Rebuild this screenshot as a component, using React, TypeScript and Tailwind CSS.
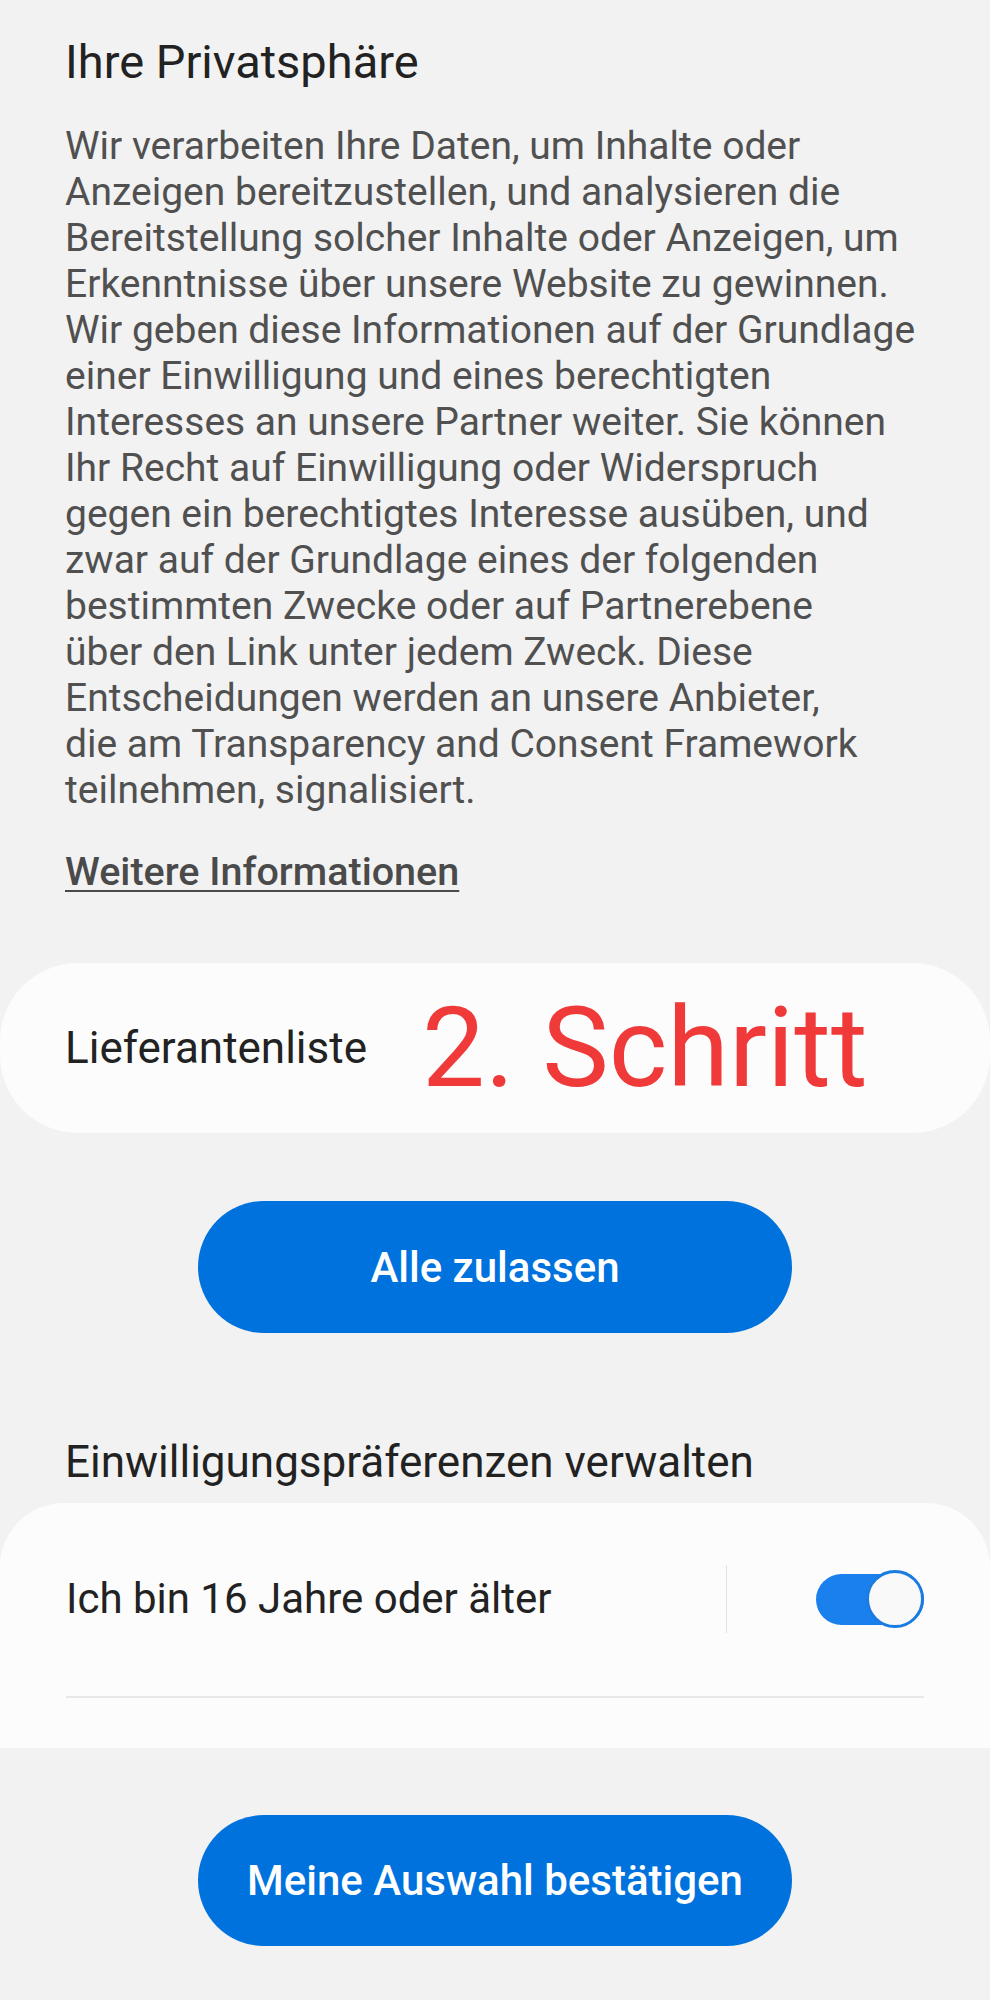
const bodyLines = [
  "Wir verarbeiten Ihre Daten, um Inhalte oder",
  "Anzeigen bereitzustellen, und analysieren die",
  "Bereitstellung solcher Inhalte oder Anzeigen, um",
  "Erkenntnisse über unsere Website zu gewinnen.",
  "Wir geben diese Informationen auf der Grundlage",
  "einer Einwilligung und eines berechtigten",
  "Interesses an unsere Partner weiter. Sie können",
  "Ihr Recht auf Einwilligung oder Widerspruch",
  "gegen ein berechtigtes Interesse ausüben, und",
  "zwar auf der Grundlage eines der folgenden",
  "bestimmten Zwecke oder auf Partnerebene",
  "über den Link unter jedem Zweck. Diese",
  "Entscheidungen werden an unsere Anbieter,",
  "die am Transparency and Consent Framework",
  "teilnehmen, signalisiert.",
];

function Toggle() {
  return (
    <div className="flex h-[51px] w-[108px] items-center justify-end rounded-full bg-[#1a80ee]">
      <div className="h-[58px] w-[58px] shrink-0 rounded-full border-[3px] border-[#1a7ce0] bg-[#f9f9f9]" />
    </div>
  );
}

export default function App() {
  return (
    <div className="min-h-[2000px] w-[990px] bg-[#f2f2f2] font-[Roboto,sans-serif] pb-[54px]">
      {/* Intro text */}
      <div className="px-[65px] pt-[34px]">
        <h1 className="text-[47px] leading-[56px] text-[#222222]">Ihre Privatsphäre</h1>

        <p className="mt-[33px] text-[39px] leading-[46px] text-[#505050]">
          {bodyLines.map((line) => (
            <span key={line} className="block whitespace-nowrap">
              {line}
            </span>
          ))}
        </p>

        <a className="mt-[36px] block text-[39.5px] font-medium leading-[46px] text-[#4a4a4a] underline decoration-2 underline-offset-[5px]">
          Weitere Informationen
        </a>
      </div>

      {/* Vendor list */}
      <div className="mt-[68px] flex h-[170px] items-center gap-[55px] rounded-[78px] bg-[#fcfcfc] px-[65px]">
        <span className="text-[44px] leading-none text-[#222222]">Lieferantenliste</span>
        <span className="text-[112px] leading-none text-[#f03a3a]">2. Schritt</span>
      </div>

      <button className="mx-auto mt-[68px] flex h-[132px] w-[594px] items-center justify-center rounded-full bg-[#0072dd] text-[42px] font-medium text-white">
        Alle zulassen
      </button>

      {/* Preferences */}
      <h2 className="mt-[102px] px-[65px] text-[44px] leading-[54px] text-[#222222]">
        Einwilligungspräferenzen verwalten
      </h2>

      <div className="mt-[14px] h-[245px] rounded-t-[64px] bg-[#fcfcfc] px-[66px] pt-[62px]">
        <div className="flex h-[68px] items-center">
          <span className="flex-1 text-[42px] leading-none text-[#222222]">Ich bin 16 Jahre oder älter</span>
          <div className="h-[68px] w-px bg-[#e2e2e2]" />
          <div className="ml-[89px]">
            <Toggle />
          </div>
        </div>
        <div className="mt-[63px] h-[2px] bg-[#e8e8e8]" />
      </div>

      <button className="mx-auto mt-[67px] flex h-[131px] w-[594px] items-center justify-center rounded-full bg-[#0072dd] text-[42px] font-medium text-white">
        Meine Auswahl bestätigen
      </button>
    </div>
  );
}
